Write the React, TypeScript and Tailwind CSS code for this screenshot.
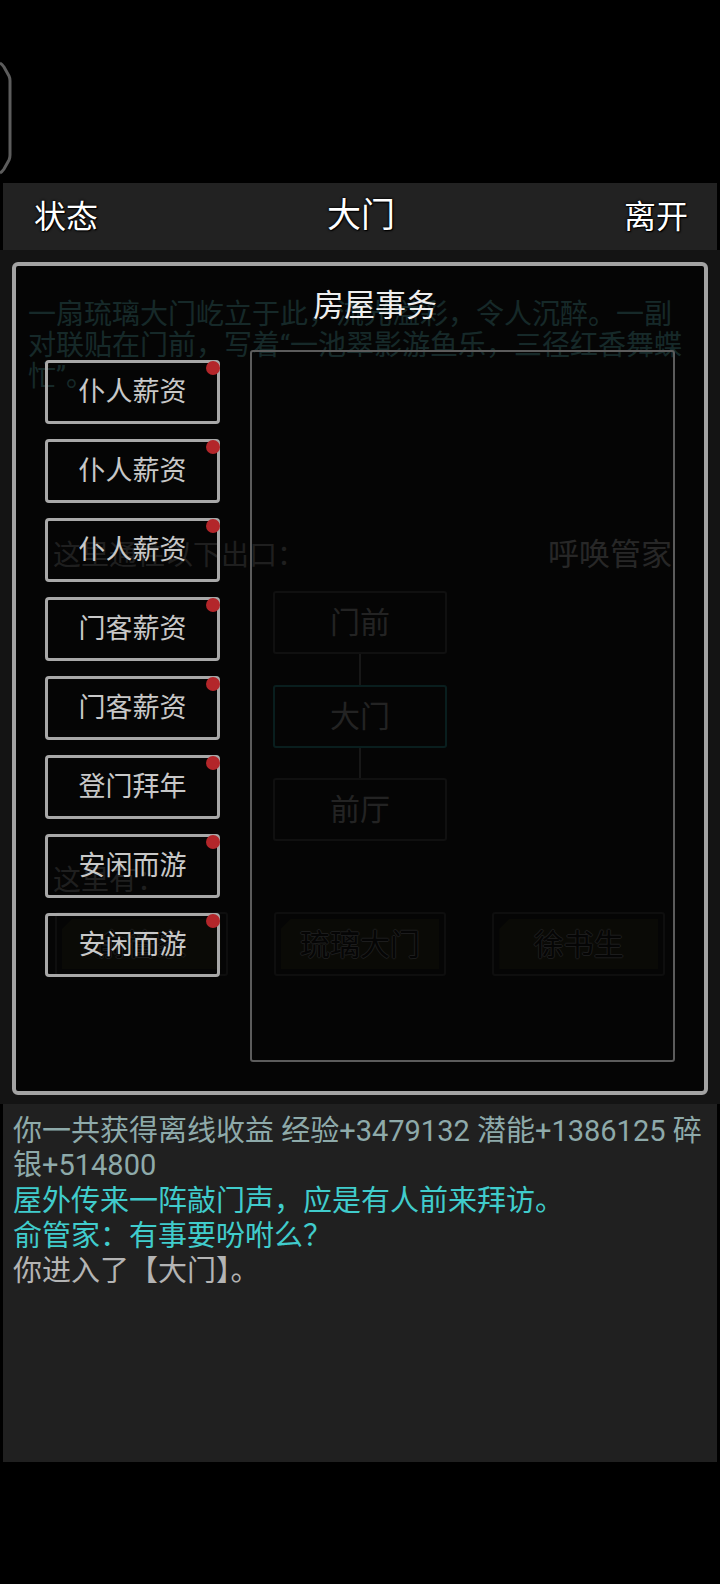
export default function App() {
  const leftBtns = [
    "仆人薪资",
    "仆人薪资",
    "仆人薪资",
    "门客薪资",
    "门客薪资",
    "登门拜年",
    "安闲而游",
    "安闲而游",
  ];
  const people = ["俞管家", "琉璃大门", "徐书生"];
  return (
    <div className="relative w-[720px] h-[1584px] bg-black overflow-hidden font-['Roboto','Noto_Sans_CJK_SC',sans-serif]">
      {/* top area */}
      <div className="relative h-[183px]">
        <svg
          className="absolute left-0 top-[58px]"
          width="16"
          height="122"
          viewBox="0 0 16 122"
        >
          <path
            d="M0 5 Q2 6 4 9 L9 18 Q10 20 10 23 L10 97 Q10 100 9 102 L4 111 Q2 114 0 115"
            fill="none"
            stroke="#5c5c5c"
            strokeWidth="3"
          />
        </svg>
      </div>

      {/* header */}
      <header className="mx-[3px] h-[67px] bg-[#222222] flex items-center justify-between pl-[31px] pr-[29px] text-white text-[32px] leading-none [text-shadow:0_0_3px_#000,0_0_2px_#000,1px_1px_1px_#000]">
        <span>状态</span>
        <span className="text-[34px] -mt-[4px]">大门</span>
        <span>离开</span>
      </header>

      {/* scene */}
      <div className="relative h-[854px] bg-[#141414] pt-[49px]">
        <div className="pl-[28px] text-[28px] leading-[31px] text-[#58a4a4] whitespace-nowrap">
          <div>一扇琉璃大门屹立于此，流光溢彩，令人沉醉。一副</div>
          <div>对联贴在门前，写着“一池翠影游鱼乐，三径红香舞蝶</div>
          <div>忙”。</div>
        </div>

        <div className="mt-[148px] flex justify-between items-center pl-[53px] pr-[48px] h-[31px]">
          <span className="text-[28px] text-[#7c7c7c]">这里通往以下出口：</span>
          <span className="text-[31px] text-[#9c9c9c]">呼唤管家</span>
        </div>

        <div className="mt-[20px] flex flex-col items-center">
          <div className="w-[174px] h-[63px] border-2 border-[#404040] rounded-[3px] flex items-center justify-center text-[30px] text-[#8c8c8c]">
            门前
          </div>
          <div className="w-[2px] h-[31px] bg-[#5c5c5c]" />
          <div className="w-[174px] h-[63px] border-2 border-[#247878] rounded-[3px] flex items-center justify-center text-[30px] text-[#8c8c8c]">
            大门
          </div>
          <div className="w-[2px] h-[30px] bg-[#5c5c5c]" />
          <div className="w-[174px] h-[63px] border-2 border-[#404040] rounded-[3px] flex items-center justify-center text-[30px] text-[#8c8c8c]">
            前厅
          </div>
        </div>

        <div className="mt-[24px] pl-[53px] text-[28px] leading-[31px] text-[#7c7c7c]">
          这里有：
        </div>

        <div className="mt-[16px] mx-[55px] grid grid-cols-3 gap-[46px]">
          {people.map((p) => (
            <div
              key={p}
              className="h-[64px] border-2 border-[#383838] rounded-[3px] p-[5px]"
            >
              <div className="h-full bg-[#2a2a18] [clip-path:polygon(10px_0,100%_0,100%_100%,0_100%,0_10px)] flex items-center justify-center text-[30px] text-[#141414] [text-shadow:-1px_0_#707070,1px_0_#707070,0_-1px_#707070,0_1px_#707070]">
                {p}
              </div>
            </div>
          ))}
        </div>

        {/* modal */}
        <div className="absolute left-[12px] top-[12px] w-[696px] h-[833px] border-4 border-[#a3a3a3] rounded-[6px] bg-black/75 flex flex-col">
          <div className="h-[78px] flex items-center justify-center pl-[30px] text-[31px] text-[#eeeeee] leading-none">
            房屋事务
          </div>
          <div className="flex pl-[29px]">
            <div className="w-[175px] pt-[16px] flex flex-col gap-[15px]">
              {leftBtns.map((b, i) => (
                <div
                  key={i}
                  className="relative h-[64px] border-[3px] border-[#a8a8a8] rounded-[4px] flex items-center justify-center text-[27px] text-[#c8c8c8] leading-none"
                >
                  {b}
                  <span className="absolute top-[-2px] right-[-3px] w-[14px] h-[14px] rounded-full bg-[#b3262a]" />
                </div>
              ))}
            </div>
            <div className="ml-[30px] mt-[6px] w-[425px] h-[712px] border-2 border-[#5c5c5c] rounded-[3px]" />
          </div>
        </div>
      </div>

      {/* log */}
      <div className="mx-[3px] h-[358px] bg-[#202020] pl-[10px] pt-[10px]">
        <div className="text-[29px]/[34px] text-[#8eaaaa]">
          你一共获得离线收益 经验+3479132 潜能+1386125 碎
          <br />
          银+514800
        </div>
        <div className="mt-[2px] text-[29px]/[35px] text-[#40cccc]">
          屋外传来一阵敲门声，应是有人前来拜访。
        </div>
        <div className="text-[29px]/[35px] text-[#40cccc]">俞管家：有事要吩咐么？</div>
        <div className="text-[29px]/[35px] text-[#b4b4b4]">你进入了【大门】。</div>
      </div>
    </div>
  );
}
